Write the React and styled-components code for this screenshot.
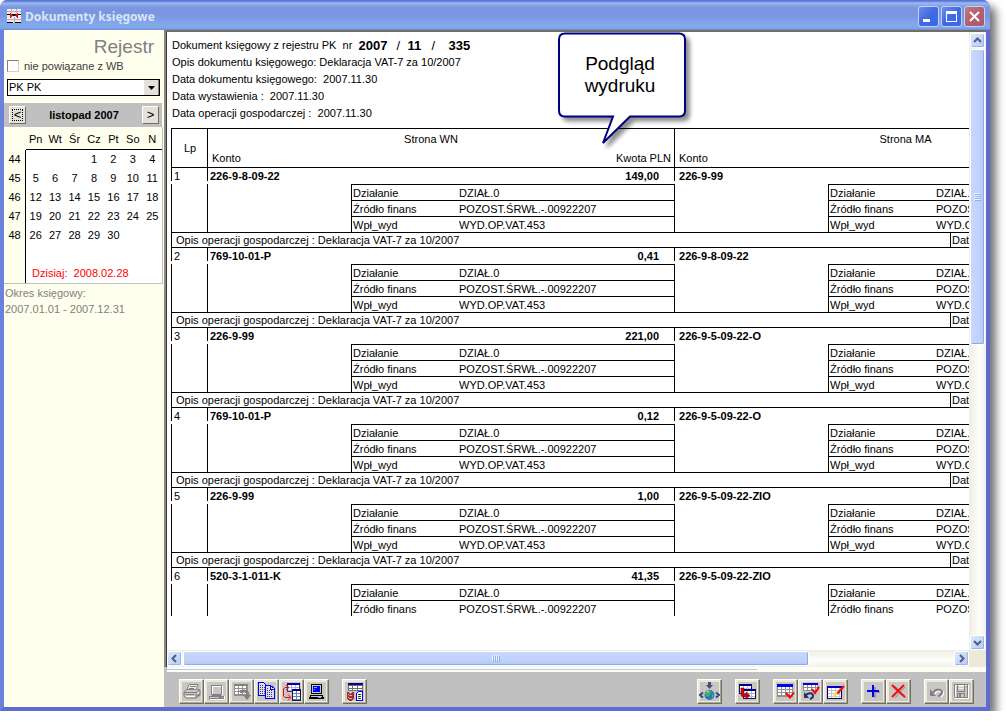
import React from "react";
import styled, { createGlobalStyle } from "styled-components";

const GlobalStyle = createGlobalStyle`
  * {
    box-sizing: border-box;
  }
  body {
    margin: 0;
    background: #ffffff;
    color: #000000;
    font-family: "Liberation Sans", Arial, sans-serif;
    font-size: 11px;
    line-height: 15px;
    overflow: hidden;
  }
  button, input, select {
    font: inherit;
    color: inherit;
    margin: 0;
    padding: 0;
  }
`

const Window = styled.div`
  display: flex;
  flex-direction: column;
  height: calc(100vh - 17px);
  min-height: 500px;
  margin-right: 17px;
  border: 4px solid #7b90e0;
  border-top: none;
  border-color: #6f84dc #5f6bd0 #5f6bd0 #6b82dc;
  border-radius: 8px 8px 0 0;
  box-shadow: 6px 6px 9px rgba(0, 0, 0, 0.55);
`

const TitleBar = styled.header`
  display: flex;
  align-items: center;
  flex: none;
  height: 30px;
  margin: 0 -4px;
  padding: 3px 5px 0 7px;
  gap: 4px;
  border-radius: 7px 7px 0 0;
  background: linear-gradient(#5876d8 0, #5876d8 1px, #9db9f0 3px, #7d97e2 7px, #7a96df 15px, #82a8ec 24px, #82a6ea 28px, #7088cc 30px);
`

const Title = styled.h1`
  flex: 1;
  margin: 0;
  color: #d8e4f8;
  font-family: "Noto Sans", sans-serif;
  font-size: 12px;
  font-weight: 700;
  line-height: 20px;
`

const WindowButtons = styled.div`
  display: flex;
  gap: 2px;
`

const WindowButton = styled.button`
  width: 21px;
  height: 21px;
  border: 1px solid #c3d0f5;
  border-radius: 3px;
  background: ${(props) => props.$close
    ? "linear-gradient(135deg, #c07b86, #b3606c 50%, #a85a72)"
    : "linear-gradient(135deg, #6d8cec, #3f69e2 50%, #3a6cec)"};

  svg {
    display: block;
  }
`

const Body = styled.div`
  display: flex;
  flex: 1;
  min-height: 0;
`

const Sidebar = styled.aside`
  flex: none;
  width: 160px;
  background: #ffffee;
`

const Heading = styled.h2`
  margin: 0;
  padding: 7px 10px 0 0;
  color: #808080;
  font-size: 19px;
  font-weight: 400;
  line-height: 20px;
  text-align: right;
`

const CheckLabel = styled.label`
  display: flex;
  align-items: center;
  gap: 5px;
  height: 18px;
  padding-left: 3px;
  color: #404040;
`

const CheckBox = styled.input`
  appearance: none;
  width: 12px;
  height: 12px;
  border: 1px solid #808080;
  border-right-color: #d4d0c8;
  border-bottom-color: #d4d0c8;
  background: #ffffff;
`

const SelectBox = styled.div`
  display: flex;
  height: 17px;
  margin: 4px 4px 7px 3px;
  border: 1px solid #000000;
  background: #ffffff;
`

const Select = styled.select`
  flex: 1;
  min-width: 0;
  padding-left: 1px;
  border: none;
  outline: none;
  appearance: none;
  background: transparent;
  line-height: 15px;
`

const SelectArrow = styled.span`
  display: flex;
  align-items: center;
  justify-content: center;
  width: 15px;
  border-right: 1px solid #808080;
  background: #e4e2d8;
`

const CalendarBar = styled.div`
  display: flex;
  align-items: center;
  justify-content: space-between;
  height: 24px;
  margin-right: 2px;
  padding: 0 3px 0 5px;
  background: #c0c0c0;
  font-weight: 700;
`

const MonthButton = styled.button`
  width: 17px;
  height: 18px;
  border: 1px solid #ffffff;
  border-right-color: #716f64;
  border-bottom-color: #716f64;
  background: #e4e2d8;
  font-size: 13px;
  font-weight: 400;
  line-height: 14px;
  outline: ${(props) => props.$focused ? "1px dotted #000000" : "none"};
  outline-offset: -4px;
`

const Calendar = styled.table`
  width: 159px;
  border-right: 1px solid #c0c0c0;
  border-bottom: 1px solid #c0c0c0;
  border-spacing: 0;
  table-layout: fixed;
  text-align: center;

  th, td {
    height: 19px;
    padding: 0;
    font-weight: 400;
  }
  thead th {
    height: 23px;
    padding-top: 3px;
  }
  thead th + th {
    border-bottom: 1px solid #000000;
  }
  tbody th {
    width: 22px;
    border-right: 1px solid #000000;
  }
  tbody td {
    background: #ffffff;
  }
`

const WeekColumn = styled.col`
  width: 22px;
`

const Today = styled.td`
  color: #ff0000;
  text-align: left;

  && {
    padding-left: 6px;
  }
`

const Period = styled.p`
  margin: 0;
  padding: 1px 0 0 1px;
  color: #808080;
  line-height: 16px;
`

const Main = styled.main`
  position: relative;
  display: flex;
  flex-direction: column;
  flex: 1;
  min-width: 0;
  background: #ffffff;
`

const Preview = styled.div`
  display: grid;
  grid-template-columns: 1fr 17px;
  grid-template-rows: 1fr 17px;
  flex: 1;
  min-height: 0;
  border-top: 2px solid #716f64;
  border-left: 3px solid #8c8a80;
  border-left-style: ridge;
`

const Paper = styled.div`
  min-width: 0;
  min-height: 0;
  padding: 5px 0 0 4px;
  overflow: hidden;
`

const Info = styled.p`
  display: flex;
  align-items: center;
  height: 17px;
  margin: 0;
  padding-left: 1px;
  white-space: pre;
`

const InfoNumber = styled.strong`
  width: ${(props) => props.$width}px;
  font-size: 13px;
  font-weight: ${(props) => props.$plain ? 400 : 700};
`

const Report = styled.table`
  width: 985px;
  margin-top: 6px;
  border-spacing: 0;
  table-layout: fixed;
  text-align: left;

  th, td {
    height: 16px;
    padding: 0;
    font-weight: 400;
    white-space: nowrap;
  }
`

const ReportCol = styled.col`
  width: ${(props) => props.$width}px;
`

const HeadCell = styled.th`
  && {
    height: ${(props) => props.$top ? 20 : 20}px;
    padding: 0 ${(props) => props.$right || 3}px 0 4px;
    border-top: ${(props) => props.$top ? "1px solid #000000" : "none"};
    border-bottom: ${(props) => props.$bottom ? "1px solid #000000" : "none"};
    border-left: ${(props) => props.$line ? "1px solid #000000" : "none"};
    line-height: 14px;
    text-align: ${(props) => props.$align || "left"};
  }
`

const Tick = styled.div`
  display: flex;
  justify-content: space-between;
  height: 13px;
  margin-bottom: 3px;
  padding: 0 15px 0 ${(props) => props.$indent || 2}px;
  border-left: 1px solid #000000;
  line-height: 16px;
  font-weight: ${(props) => props.$bold ? 700 : 400};
`

const Blank = styled.td`
  border-left: 1px solid #000000;
`

const DimCell = styled.td`
  border-top: 1px solid #000000;
  border-left: ${(props) => props.$line ? "1px solid #000000" : "none"};

  && {
    padding: 1px 0 0 ${(props) => props.$line ? 1 : 2}px;
    line-height: 14px;
  }
`

const NoteCell = styled.td`
  border: 1px solid #000000;
`

const Note = styled.div`
  display: grid;
  grid-template-columns: 778px 1fr;
  line-height: 14px;

  span {
    padding-left: 4px;
  }
  span + span {
    padding-left: 1px;
    border-left: 1px solid #000000;
  }
`

const VerticalBar = styled.div`
  display: flex;
  flex-direction: column;
  padding: 1px 1px 0;
  background: linear-gradient(90deg, #eeede5, #fefefb 60%, #f3f1ec);
`

const HorizontalBar = styled.div`
  display: flex;
  padding: 1px 0;
  background: linear-gradient(#eeede5, #fefefb 60%, #f3f1ec);
`

const Corner = styled.div`
  background: #ece9d8;
`

const ScrollButton = styled.button`
  display: flex;
  align-items: center;
  justify-content: center;
  flex: none;
  width: 15px;
  height: 15px;
  border: 1px solid #ffffff;
  border-radius: 2px;
  background: linear-gradient(135deg, #dce6fe, #b8cbf6);
  box-shadow: inset -1px -1px 0 #9db4e8;
`

const Thumb = styled.div`
  display: flex;
  align-items: center;
  justify-content: center;
  flex: 0 0 ${(props) => props.$size};
  margin: ${(props) => props.$vertical ? "1px 0" : "0 1px"};
  border: 1px solid #ffffff;
  border-radius: 2px;
  background: linear-gradient(${(props) => props.$vertical ? "90deg" : "180deg"}, #c9d8fc, #bfd0fb 70%, #b4c8f6);
  box-shadow: inset -1px -1px 0 #8fabe6;
`

const Track = styled.div`
  flex: 1;
`

const Strip = styled.div`
  flex: none;
  height: 5px;
  padding-top: 2px;
  border-left: 3px solid #c0c0c0;
  background: #fdfdf4;

  &::before {
    content: "";
    display: block;
    width: 72%;
    height: 1px;
    background: #b4c8f6;
  }
`

const Toolbar = styled.footer`
  display: flex;
  align-items: center;
  flex: none;
  gap: 13px;
  height: 35px;
  padding: 3px 12px 0 15px;
  background: #c0c0c0;
`

const ToolGroup = styled.div`
  display: flex;
  margin-left: ${(props) => props.$push ? "auto" : "0"};
`

const ToolButton = styled.button`
  width: 25px;
  height: 25px;
  border: 1px solid #ffffff;
  border-right-color: #716f64;
  border-bottom-color: #716f64;
  background: #c9c7c4;
  box-shadow: inset -1px -1px 0 #aca899, inset 0 0 0 2px #ece9d8;

  svg {
    display: block;
    margin: 1px;
  }
`

const Callout = styled.div`
  position: absolute;
  top: 1px;
  left: 393px;
  z-index: 1;
  width: 130px;
  height: 116px;
  padding: 22px 4px 0 0;
  font-size: 19px;
  line-height: 22px;
  text-align: center;

  svg {
    position: absolute;
    top: 0;
    left: 0;
    z-index: -1;
    overflow: visible;
    filter: drop-shadow(4px 4px 2px rgba(0, 0, 0, 0.45));
  }
`

const days = ["Pn", "Wt", "Śr", "Cz", "Pt", "So", "N"];
const weeks = [
  { no: 44, days: ["", "", "", 1, 2, 3, 4] },
  { no: 45, days: [5, 6, 7, 8, 9, 10, 11] },
  { no: 46, days: [12, 13, 14, 15, 16, 17, 18] },
  { no: 47, days: [19, 20, 21, 22, 23, 24, 25] },
  { no: 48, days: [26, 27, 28, 29, 30, "", ""] },
];

const entries = [
  { wn: "226-9-8-09-22", amount: "149,00", ma: "226-9-99" },
  { wn: "769-10-01-P", amount: "0,41", ma: "226-9-8-09-22" },
  { wn: "226-9-99", amount: "221,00", ma: "226-9-5-09-22-O" },
  { wn: "769-10-01-P", amount: "0,12", ma: "226-9-5-09-22-O" },
  { wn: "226-9-99", amount: "1,00", ma: "226-9-5-09-22-ZIO" },
  { wn: "520-3-1-011-K", amount: "41,35", ma: "226-9-5-09-22-ZIO", cut: true },
];

const dims = [
  ["Działanie", "DZIAŁ.0"],
  ["Źródło finans", "POZOST.ŚRWŁ.-.00922207"],
  ["Wpł_wyd", "WYD.OP.VAT.453"],
];

// small table drawing shared by several toolbar icons
function Grid({ x, y, w, h, color, bar, frame, barHeight = 2 }) {
  let lines = "";
  for (let row = y + barHeight + 2; row < y + h - 1; row += 3) {
    lines += `M${x} ${row + 0.5}h${w}`;
  }
  for (let col = x + 4; col < x + w - 1; col += 4) {
    lines += `M${col + 0.5} ${y + barHeight}v${h - barHeight}`;
  }
  return (
    <g shapeRendering="crispEdges" fill="none">
      <rect x={x} y={y} width={w} height={h} fill="#fff" />
      <path d={lines} stroke={color} />
      <rect x={x + 0.5} y={y + 0.5} width={w - 1} height={h - 1} stroke={frame || color} />
      <rect x={x} y={y} width={w} height={barHeight} fill={bar || color} />
    </g>
  );
}

const icons = {
  print: (
    <g fill="none" stroke="#808080">
      <path d="M10 5.500h9l-2 5H8z" fill="#eee" />
      <path d="M11 7.500h6M10 9.500h5" />
      <path d="M8 10l-3 3v4l2 2h10l4-3v-5l-3-1M5 13.500h12l4-3M17 13v6M6 15.500h9" />
      <path d="M18 15l2-1M7 17.500h9" stroke="#fff" />
      <path d="M18 17l3-2" strokeWidth="2" />
    </g>
  ),
  screenOff: (
    <g fill="none" shapeRendering="crispEdges">
      <path d="M8.500 7.500h10v8h-10z M6.500 17.500h14v3h-14z" stroke="#fff" />
      <path d="M7.500 6.500h10v9h-10z M5.500 17.500h14v2h-14z M8 16.500h9M15 18.500h3" stroke="#808080" />
    </g>
  ),
  tableOff: (
    <g>
      <Grid x={5} y={5} w={14} h={12} color="#909090" bar="#808080" />
      <path d="M11 13c5-2 8-1 8 4" fill="none" stroke="#808080" strokeWidth="3" />
      <path d="M14 16h8l-4 5z" fill="#808080" />
    </g>
  ),
  copy: (
    <g fill="#d9dcec" stroke="#0000f0" shapeRendering="crispEdges">
      <path d="M4.500 3.500h5l3 3v10h-8z" />
      <path d="M6 6.500h3M6 8.500h5M6 10.500h5M6 12.500h5M6 14.500h5" stroke="#444" strokeDasharray="1 1" />
      <path d="M11.500 6.500h5l4 3v10h-9z" />
      <path d="M16.500 6v4h4" fill="none" />
      <path d="M13 9.500h2M13 11.500h6M13 13.500h6M13 15.500h6M13 17.500h6" stroke="#444" strokeDasharray="1 1" />
    </g>
  ),
  move: (
    <g>
      <Grid x={8} y={4} w={13} h={9} color="#b0b4d0" frame="#3038a0" bar="#0000a0" />
      <Grid x={13} y={10} w={9} h={12} color="#7080a0" frame="#101060" bar="#000080" />
      <path d="M8 8.500H6l-1.500 1.500v7l1.500 1.500h5" fill="none" stroke="#f00" strokeWidth="1" />
      <path d="M9 15.500l3 3-3 3M7 6l3 2.500L7 11" fill="none" stroke="#f00" />
    </g>
  ),
  screen: (
    <g shapeRendering="crispEdges">
      <path d="M7 5h11v10H7z M6 16h13l1 4H5z" fill="#000" />
      <path d="M8 6h9v8H8z" fill="#c8c8c8" />
      <path d="M9 7h7v6H9z" fill="#00f" />
      <path d="M10 8.500h3M10 10.500h1" stroke="#4cf" />
      <path d="M7 17.500h11" stroke="#c8c8c8" />
      <path d="M14 18.500h3" stroke="#4cf" />
    </g>
  ),
  books: (
    <g shapeRendering="crispEdges">
      <path d="M6 4h15v8H6z" fill="#707070" />
      <path d="M7 7h3v2H7zM11 7h4v2h-4zM16 7h4v2h-4zM7 10h3v1H7zM11 10h4v1h-4zM16 10h4v1h-4z" fill="#fff" />
      <path d="M6 4h15v2H6z" fill="#0000a0" />
      <path d="M5 13h2l1 2h1l1-2h2v7l-3 2H8l-3-2z" fill="#a03030" />
      <path d="M6 15l2.500 2 2.500-2M6 18l2.500 2 2.500-2" stroke="#e0b0b0" fill="none" strokeDasharray="1 1" />
      <path d="M16.500 12.500h4v9h-6v-7z" fill="#fff" stroke="#0000f0" />
      <path d="M16 15.500h3M16 17.500h3M16 19.500h3" stroke="#333" />
    </g>
  ),
  globe: (
    <g>
      <path d="M11 3h3v3h2l-3.500 4L9 6h2z" fill="#465070" />
      <circle cx="12.500" cy="16" r="5" fill="#2878c8" />
      <path d="M10 11l4 1-1 4-3 2-2-3z M15 15l2 1-2 4z" fill="#48b050" />
      <path d="M10 13l2-1" stroke="#d8f0ff" />
      <path d="M6 13.500l-3 2.500 3 2.500M19 13.500l3 2.500-3 2.500" fill="none" stroke="#304880" strokeWidth="2" />
    </g>
  ),
  transfer: (
    <g>
      <Grid x={4} y={5} w={13} h={10} color="#c0c4d8" frame="#101070" bar="#000080" />
      <Grid x={8} y={10} w={13} h={10} color="#b0b4d0" frame="#101070" bar="#000080" />
      <path d="M6 9h3v5q0 1 1 1h1v-2l4 3.500-4 3.500v-2H9q-3 0-3-3z" fill="#d80000" stroke="#500000" strokeWidth="0.500" />
    </g>
  ),
  tableCheck: (
    <g>
      <Grid x={4} y={5} w={16} h={13} color="#909090" bar="#0000e8" barHeight={3} />
      <path d="M13 14l4 4.500 4-5" fill="none" stroke="#f00" strokeWidth="2" />
    </g>
  ),
  tableUndo: (
    <g>
      <Grid x={5} y={4} w={15} h={8} color="#909090" bar="#0000e8" />
      <path d="M14 10l3 4 4-6" fill="none" stroke="#f00" strokeWidth="2" />
      <path d="M8 16c3-3 7-2 7 1q0 2-3 3" fill="none" stroke="#203070" strokeWidth="2" />
      <path d="M6 13v6h5z" fill="#203070" />
    </g>
  ),
  tableEdit: (
    <g>
      <Grid x={4} y={7} w={15} h={13} color="#c0c4d8" frame="#000080" bar="#0000c0" />
      <path d="M21 7l-7 8" stroke="#f00" strokeWidth="2" />
      <path d="M14 14l-4 4" stroke="#f8e820" strokeWidth="2" />
    </g>
  ),
  add: (
    <g shapeRendering="crispEdges">
      <path d="M13 8h2v4h4v2h-4v5h-2z" fill="#9a98a0" />
      <path d="M11 6h2v5h5v2h-5v5h-2v-5H6v-2h5z" fill="#0000f0" />
    </g>
  ),
  remove: (
    <g fill="none">
      <path d="M9 7l11 12M19 8L9 19" stroke="#909090" />
      <path d="M6 6c4 4 8 8 13 12M18 6L6 18" stroke="#f01010" strokeWidth="2" />
    </g>
  ),
  undo: (
    <g fill="none">
      <path d="M10 15c3-5 10-4 9 0l-2 3" stroke="#fff" strokeWidth="2" />
      <path d="M9 14c3-5 10-4 9 0-1 2-2 3-4 3" stroke="#808080" strokeWidth="2" />
      <path d="M6 10v7h6z" fill="#808080" />
    </g>
  ),
  save: (
    <g fill="none" shapeRendering="crispEdges">
      <path d="M6.500 6.500h13v13h-13z" stroke="#fff" />
      <path d="M5.500 5.500h13v13h-12l-1-1z" stroke="#808080" />
      <path d="M8.500 5v7h7V5M8.500 18v-4h7v4M17 7.500h1" stroke="#808080" />
      <path d="M10 15h2v3h-2z" fill="#808080" />
      <path d="M10 7.500h5M10 9.500h5" stroke="#eee" />
    </g>
  ),
};

function Tool({ icon, label }) {
  return (
    <ToolButton type="button" aria-label={label}>
      <svg width="21" height="21" viewBox="2 2 21 21">{icons[icon]}</svg>
    </ToolButton>
  );
}

function Scroller({ d, label }) {
  return (
    <ScrollButton type="button" aria-label={label}>
      <svg width="9" height="9" viewBox="0 0 9 9">
        <path d={d} fill="none" stroke="#4d6185" strokeWidth="2" />
      </svg>
    </ScrollButton>
  );
}

function Entry({ entry, index }) {
  const rows = entry.cut ? dims.slice(0, 2) : dims;
  return (
    <tbody>
      <tr>
        <td><Tick>{index + 1}</Tick></td>
        <td colSpan={3}><Tick $bold><span>{entry.wn}</span><span>{entry.amount}</span></Tick></td>
        <td colSpan={3}><Tick $bold $indent={4}>{entry.ma}</Tick></td>
      </tr>
      {rows.map(([name, value], i) => (
        <tr key={name}>
          {i === 0 && <Blank rowSpan={rows.length} />}
          {i === 0 && <Blank rowSpan={rows.length} />}
          <DimCell $line>{name}</DimCell>
          <DimCell>{value}</DimCell>
          {i === 0 && <Blank rowSpan={rows.length} />}
          <DimCell $line>{name}</DimCell>
          <DimCell>{value}</DimCell>
        </tr>
      ))}
      {!entry.cut && (
        <tr>
          <NoteCell colSpan={7}>
            <Note>
              <span>Opis operacji gospodarczej : Deklaracja VAT-7 za 10/2007</span>
              <span>Data</span>
            </Note>
          </NoteCell>
        </tr>
      )}
    </tbody>
  );
}

function App() {
  return (
    <>
      <GlobalStyle />
      <Window>
        <TitleBar>
          <svg width="14" height="15" viewBox="0 0 14 15" shapeRendering="crispEdges">
            <path d="M0 0h14v14H0z" fill="#ececec" />
            <path d="M0 2.500h14M4.500 0v4M9.500 0v4M0 10.500h14M7 8v6" stroke="#b0b0b0" />
            <path d="M0 5h14v1H9v1H5V6H0z" fill="#000" />
            <path d="M0 13.500h6M8 13.500h6" stroke="#000" />
            <path d="M3 4l3 2.500L3 9z M11 4L8 6.500 11 9z" fill="#f00" />
          </svg>
          <Title>Dokumenty księgowe</Title>
          <WindowButtons>
            <WindowButton type="button" aria-label="Minimalizuj">
              <svg width="19" height="19"><path d="M4 12h7v3H4z" fill="#fff" /></svg>
            </WindowButton>
            <WindowButton type="button" aria-label="Maksymalizuj">
              <svg width="19" height="19"><path d="M4 4h11v11H4z M5 7v7h9V7z" fill="#fff" fillRule="evenodd" /></svg>
            </WindowButton>
            <WindowButton type="button" $close aria-label="Zamknij">
              <svg width="19" height="19"><path d="M5 5l9 9M14 5l-9 9" stroke="#fff" strokeWidth="2" /></svg>
            </WindowButton>
          </WindowButtons>
        </TitleBar>
        <Body>
          <Sidebar>
            <Heading>Rejestr</Heading>
            <CheckLabel>
              <CheckBox type="checkbox" />
              nie powiązane z WB
            </CheckLabel>
            <SelectBox>
              <Select aria-label="Rejestr">
                <option>PK PK</option>
              </Select>
              <SelectArrow>
                <svg width="7" height="4"><path d="M0 0h7L3.500 4z" /></svg>
              </SelectArrow>
            </SelectBox>
            <CalendarBar>
              <MonthButton type="button" $focused>&lt;</MonthButton>
              <span>listopad 2007</span>
              <MonthButton type="button">&gt;</MonthButton>
            </CalendarBar>
            <Calendar>
              <colgroup>
                <WeekColumn />
                {days.map((day) => <col key={day} />)}
              </colgroup>
              <thead>
                <tr>
                  <th></th>
                  {days.map((day) => <th key={day}>{day}</th>)}
                </tr>
              </thead>
              <tbody>
                {weeks.map((week) => (
                  <tr key={week.no}>
                    <th>{week.no}</th>
                    {week.days.map((day, i) => <td key={i}>{day}</td>)}
                  </tr>
                ))}
                <tr>
                  <th></th>
                  <td colSpan={7}></td>
                </tr>
                <tr>
                  <th></th>
                  <Today colSpan={7}>Dzisiaj:&nbsp; 2008.02.28</Today>
                </tr>
              </tbody>
            </Calendar>
            <Period>Okres księgowy:<br />2007.01.01 - 2007.12.31</Period>
          </Sidebar>
          <Main>
            <Preview>
              <Paper>
                <Info>
                  {"Dokument księgowy z rejestru PK  nr  "}
                  <InfoNumber $width={38}>2007</InfoNumber>
                  <InfoNumber $width={11} $plain>/</InfoNumber>
                  <InfoNumber $width={24}>11</InfoNumber>
                  <InfoNumber $width={17} $plain>/</InfoNumber>
                  <InfoNumber $width={24}>335</InfoNumber>
                </Info>
                <Info>Opis dokumentu księgowego: Deklaracja VAT-7 za 10/2007</Info>
                <Info>{"Data dokumentu księgowego:  2007.11.30"}</Info>
                <Info>{"Data wystawienia :  2007.11.30"}</Info>
                <Info>{"Data operacji gospodarczej :  2007.11.30"}</Info>
                <Report>
                  <colgroup>
                    <ReportCol $width={36} />
                    <ReportCol $width={144} />
                    <ReportCol $width={106} />
                    <ReportCol $width={217} />
                    <ReportCol $width={154} />
                    <ReportCol $width={106} />
                    <ReportCol $width={222} />
                  </colgroup>
                  <thead>
                    <tr>
                      <HeadCell rowSpan={2} $top $bottom $line $align="center">Lp</HeadCell>
                      <HeadCell colSpan={3} $top $line $align="center" $right={24}>Strona WN</HeadCell>
                      <HeadCell colSpan={3} $top $line $align="center" $right={24}>Strona MA</HeadCell>
                    </tr>
                    <tr>
                      <HeadCell $bottom $line>Konto</HeadCell>
                      <HeadCell colSpan={2} $bottom $align="right">Kwota PLN</HeadCell>
                      <HeadCell colSpan={3} $bottom $line>Konto</HeadCell>
                    </tr>
                  </thead>
                  {entries.map((entry, i) => <Entry key={i} entry={entry} index={i} />)}
                </Report>
              </Paper>
              <VerticalBar>
                <Scroller label="W górę" d="M1 6l3.500-3.500L8 6" />
                <Thumb $vertical $size="48%">
                  <svg width="7" height="8"><path d="M0 .5h6M0 2.500h6M0 4.500h6M0 6.500h6" stroke="#eef4fe" /><path d="M1 1.500h6M1 3.500h6M1 5.500h6M1 7.500h6" stroke="#8cb0f8" /></svg>
                </Thumb>
                <Track />
                <Scroller label="W dół" d="M1 3l3.500 3.500L8 3" />
              </VerticalBar>
              <HorizontalBar>
                <Scroller label="W lewo" d="M6 1L2.500 4.500 6 8" />
                <Thumb $size="78%">
                  <svg width="8" height="7"><path d="M.5 0v6M2.500 0v6M4.500 0v6M6.500 0v6" stroke="#eef4fe" /><path d="M1.500 1v6M3.500 1v6M5.500 1v6M7.500 1v6" stroke="#8cb0f8" /></svg>
                </Thumb>
                <Track />
                <Scroller label="W prawo" d="M3 1l3.500 3.500L3 8" />
              </HorizontalBar>
              <Corner />
            </Preview>
            <Strip />
            <Toolbar>
              <ToolGroup>
                <Tool icon="print" label="Drukuj" />
                <Tool icon="screenOff" label="Ekran" />
                <Tool icon="tableOff" label="Eksport" />
                <Tool icon="copy" label="Kopiuj" />
                <Tool icon="move" label="Przenieś" />
                <Tool icon="screen" label="Podgląd" />
              </ToolGroup>
              <ToolGroup>
                <Tool icon="books" label="Księgi" />
              </ToolGroup>
              <ToolGroup $push>
                <Tool icon="globe" label="Pobierz" />
              </ToolGroup>
              <ToolGroup>
                <Tool icon="transfer" label="Przeksięguj" />
              </ToolGroup>
              <ToolGroup>
                <Tool icon="tableCheck" label="Zatwierdź" />
                <Tool icon="tableUndo" label="Cofnij zatwierdzenie" />
                <Tool icon="tableEdit" label="Edytuj" />
              </ToolGroup>
              <ToolGroup>
                <Tool icon="add" label="Dodaj" />
                <Tool icon="remove" label="Usuń" />
              </ToolGroup>
              <ToolGroup>
                <Tool icon="undo" label="Cofnij" />
                <Tool icon="save" label="Zapisz" />
              </ToolGroup>
            </Toolbar>
            <Callout>
              <svg width="130" height="116" viewBox="0 0 130 116">
                <path
                  d="M8 2.500h114q6 0 6 6v71q0 6-6 6H73L46 112l10-26.500H8q-6 0-6-6v-71q0-6 6-6z"
                  fill="#fff"
                  stroke="#000080"
                  strokeWidth="2"
                />
              </svg>
              Podgląd<br />wydruku
            </Callout>
          </Main>
        </Body>
      </Window>
    </>
  );
}

export default App;
